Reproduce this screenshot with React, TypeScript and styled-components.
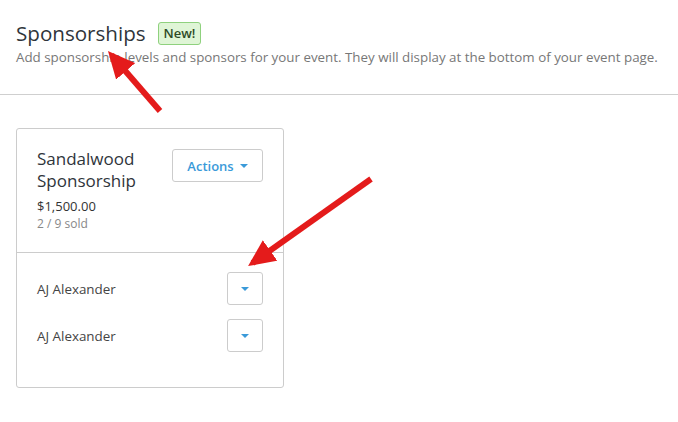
import * as React from "react";
import styled, { createGlobalStyle } from "styled-components";

const GlobalStyle = createGlobalStyle`
  html, body {
    margin: 0;
    padding: 0;
    background: #ffffff;
  }
  body {
    font-family: "Open Sans", "Liberation Sans", sans-serif;
    color: #333;
  }
`;

const sponsors = ["AJ Alexander", "AJ Alexander"];

const Caret = ({ size = 8 }: { size?: number }) => (
  <svg width={size} height={size / 2} viewBox="0 0 8 4">
    <polygon points="0,0 8,0 4,4" fill="#3a9ad9" />
  </svg>
);

const App = () => (
  <Page>
    <GlobalStyle />
    <Header>
      <TitleRow>
        <Title>Sponsorships</Title>
        <Badge>New!</Badge>
      </TitleRow>
      <Subtitle>
        Add sponsorship levels and sponsors for your event. They will display at the bottom of your event page.
      </Subtitle>
    </Header>
    <Content>
      <Card>
        <CardTop>
          <LevelInfo>
            <LevelName>Sandalwood Sponsorship</LevelName>
            <Price>$1,500.00</Price>
            <Sold>2 / 9 sold</Sold>
          </LevelInfo>
          <Button>
            Actions <Caret />
          </Button>
        </CardTop>
        <SponsorList>
          {sponsors.map((name, i) => (
            <SponsorRow key={i}>
              <SponsorName>{name}</SponsorName>
              <IconButton>
                <Caret />
              </IconButton>
            </SponsorRow>
          ))}
        </SponsorList>
      </Card>
    </Content>
    <Arrows width="678" height="422" viewBox="0 0 678 422">
      <defs>
        <marker
          id="head"
          markerWidth="4.5"
          markerHeight="4.2"
          refX="3.6"
          refY="2.1"
          orient="auto"
          markerUnits="strokeWidth"
        >
          <polygon points="0,0 4.5,2.1 0,4.2" fill="#e41b1b" />
        </marker>
      </defs>
      <line x1="160" y1="111" x2="111.5" y2="55" stroke="#e41b1b" strokeWidth="6" markerEnd="url(#head)" />
      <line x1="371" y1="179" x2="252.5" y2="263" stroke="#e41b1b" strokeWidth="6" markerEnd="url(#head)" />
    </Arrows>
  </Page>
);

const Page = styled.div`
  position: relative;
  width: 678px;
  height: 422px;
  overflow: hidden;
`;

const Header = styled.header`
  padding: 18px 16px 28px;
  border-bottom: 1px solid #cfcfcf;
`;

const TitleRow = styled.div`
  display: flex;
  align-items: center;
  gap: 12px;
`;

const Title = styled.h1`
  margin: 0;
  font-size: 20.6px;
  line-height: 30px;
  font-weight: 400;
  color: #2f353b;
`;

const Badge = styled.span`
  display: inline-block;
  padding: 2px 5px;
  font-size: 13px;
  line-height: 17px;
  font-weight: 600;
  color: #2d4a26;
  background: #dff5d6;
  border: 1px solid #8fd17e;
  border-radius: 3px;
`;

const Subtitle = styled.p`
  margin: 0;
  font-size: 13.35px;
  line-height: 18px;
  color: #777;
`;

const Content = styled.main`
  padding: 33px 16px;
`;

const Card = styled.section`
  width: 266px;
  border: 1px solid #cccccc;
  border-radius: 3px;
`;

const CardTop = styled.div`
  display: flex;
  justify-content: space-between;
  align-items: flex-start;
  padding: 19px 20px 19px 20px;
  border-bottom: 1px solid #cccccc;
`;

const LevelInfo = styled.div`
  display: flex;
  flex-direction: column;
`;

const LevelName = styled.h2`
  margin: 0 0 5px;
  width: 125px;
  font-size: 17px;
  line-height: 22px;
  font-weight: 400;
  color: #2f353b;
`;

const Price = styled.div`
  font-size: 13px;
  line-height: 18px;
  color: #333;
`;

const Sold = styled.div`
  font-size: 12px;
  line-height: 18px;
  color: #888;
`;

const Button = styled.button`
  display: flex;
  align-items: center;
  justify-content: center;
  gap: 6px;
  width: 91px;
  height: 33px;
  margin-top: 1px;
  padding: 0;
  font-family: inherit;
  font-size: 13px;
  font-weight: 600;
  color: #3a9ad9;
  background: #fff;
  border: 1px solid #cccccc;
  border-radius: 3px;
`;

const SponsorList = styled.div`
  display: flex;
  flex-direction: column;
  gap: 14px;
  padding: 19px 20px 35px 20px;
`;

const SponsorRow = styled.div`
  display: flex;
  justify-content: space-between;
  align-items: center;
`;

const SponsorName = styled.span`
  font-size: 13.4px;
  color: #444;
`;

const IconButton = styled(Button)`
  width: 36px;
  margin-top: 0;
`;

const Arrows = styled.svg`
  position: absolute;
  top: 0;
  left: 0;
  pointer-events: none;
`;

export default App;
